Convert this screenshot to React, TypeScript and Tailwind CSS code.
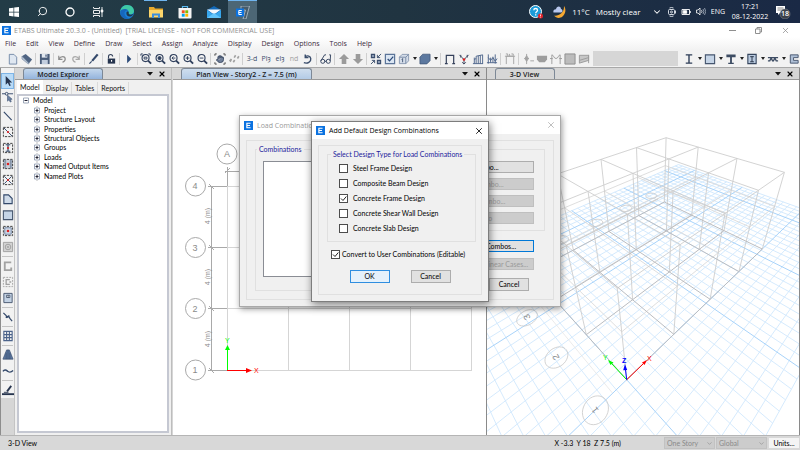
import React from 'react'
import { ChevronDown, Hand, Search, X } from 'lucide-react'

const MENU = [
  'File', 'Edit', 'View', 'Define', 'Draw', 'Select', 'Assign', 'Analyze',
  'Display', 'Design', 'Options', 'Tools', 'Help',
]

const TREE = [
  'Project', 'Structure Layout', 'Properties', 'Structural Objects',
  'Groups', 'Loads', 'Named Output Items', 'Named Plots',
]

// '|' and ':' are wide and narrow separators, 'v' is a drop-down arrow
const TOOLBAR = [
  'new', 'open', '|', 'save', ':', 'undo', 'redo', '|', 'pen', ':', 'lock', '|', 'run', ':',
  'zoomWin', 'zoomFull', 'zoomPrev', 'zoomIn', 'zoomOut', '|', 'pan', 'walk', '|',
  't:3-d', 't:Plȝ', 't:elȝ', 't:nd', 'rotate', '|', 'glasses', '|', 'up', 'down', '|',
  'shrink', 'check', 'cube', 'v', 'solid', 'v', '|', 'frame', 'deform', 'force', 'diagram', '|',
  'gFrame', '|', 'gNode', 'gShell', 'gCurve', 'gBox', 'gDiag',
]

const SECTION_TOOLS = ['beam', 'v', 'square', 'v', 'tee', 'v', 'ibox', 'v', 'deck', 'v', 'wall']

const SIDEBAR = [
  'cursor', 'nodeCursor', '|', 'line', 'dashLine', 'dashI', 'dashCol', 'dashX', '|',
  'poly', 'square', 'dashSquare', 'gOpening', '|', 'gWall', 'gDashWall', 'door', '|',
  'link', '|', 'grid', '|', 'tower', 'wave', '|', 'draft',
]

const navy = '#33486a'

const magnifier = (inner: React.ReactNode) => (
  <g fill="none" stroke="#2f3f5c">
    <circle cx="6" cy="5.5" r="3.8" strokeWidth="1.2" />
    <path d="M8.8 8.3 12 11.5" strokeWidth="2" />
    {inner}
  </g>
)

const dashed = (inner: React.ReactNode, fill = 'none') => (
  <g fill="none">
    <rect x="1.5" y="1.5" width="10" height="10" fill={fill} stroke="#333" strokeDasharray="2.5 1.2" />
    {inner}
  </g>
)

const ICONS: Record<string, React.ReactNode> = {
  new: <path d="M2.500 1.500h5l3 3v7.500h-8z" fill="#dfe7f1" stroke="#7188a6" />,
  open: (
    <g>
      <path d="M1 3.500 5 1l7 6-3.500 4.500z" fill="#4f6482" />
      <path d="M1 3.500v3L8 12l.5-1z" fill="#b9c6d6" stroke="#5b6f8c" strokeWidth=".5" />
    </g>
  ),
  save: (
    <g>
      <path d="M1 1h10.500v11H1z" fill="#4a5d7a" />
      <path d="M3 1h6v4H3z" fill="#e3e9f0" />
      <path d="M3 7.500h6.500V12H3z" fill="#c3cede" />
      <path d="M7 1.500h1.200v2.500H7z" fill="#33486a" />
    </g>
  ),
  undo: <path d="M3 3v4h4M3.200 6.500C5 3 10 3 10 6.500c0 2-1.500 3-3 3.500" fill="none" stroke="#8e8e8e" strokeWidth="1.300" />,
  redo: <path d="M10 3v4H6M9.800 6.500C8 3 3 3 3 6.500c0 2 1.500 3 3 3.500" fill="none" stroke="#a8a8a8" strokeWidth="1.300" />,
  pen: (
    <g stroke={navy} fill="none">
      <path d="m10.500 1.500-6 7" strokeWidth="2.400" />
      <path d="M4 9 1.500 11.500" strokeWidth="1.200" />
    </g>
  ),
  lock: (
    <g>
      <path d="M3.800 6V3.800c0-3 4.500-3 4.500 0" fill="none" stroke="#33415a" strokeWidth="1.200" />
      <path d="M3 6h8v5.500H3z" fill="#26344e" />
      <path d="M6.500 7.500h1.200v2H6.500z" fill="#fff" />
    </g>
  ),
  run: <path d="m4.500 2 4.500 4.500L4.500 11z" fill="#2c4a78" />,
  zoomWin: magnifier(<path d="M1 1h2M1 1v2M11 1H9M11 1v2M4.500 4.500h3v2h-3z" />),
  zoomFull: magnifier(<circle cx="6" cy="5.500" r="1.700" fill="#2f3f5c" />),
  zoomPrev: magnifier(<path d="M8 5.500H4.500M6 3.800 4.300 5.500 6 7.200" />),
  zoomIn: magnifier(<path d="M4 5.500h4M6 3.500v4" />),
  zoomOut: magnifier(<path d="M4 5.500h4" />),
  pan: (
    <g>
      <path d="M1 3V1h2M10 1h2v2M1 10v2h2M12 10v2h-2" fill="none" stroke="#444" />
      <Hand x="2" y="2" width="9" height="9" fill="#71819b" stroke="#33415a" strokeWidth="2.500" />
    </g>
  ),
  walk: (
    <g fill="#a0a0a0">
      <path d="M1 8.500 3 6l1.500 1L3 10zM5 9.500 6.500 7l1.500 1-1.500 2.500zM6 4.500 7.500 2 9 3 7.500 5.500zM9.500 5.500 11 3l1.500 1L11 6.500z" />
    </g>
  ),
  rotate: <path d="M2 10.500c4 1.500 8-1 7.500-4.500C9 3 6 2.500 3.500 4M3.500 1.500V5H7" fill="none" stroke="#3a4d6c" strokeWidth="1.500" />,
  glasses: (
    <g fill="none" stroke="#2f3f5c">
      <circle cx="3" cy="9" r="2.200" />
      <circle cx="9" cy="9" r="2.200" />
      <path d="M5 9h2M1 8.500 5 2h1.500M11 8.500 11.500 2H10" />
    </g>
  ),
  up: <path d="M6.500 1 12 6.500H9V12H4V6.500H1z" fill="#9b9b9b" />,
  down: <path d="M6.500 12 12 6.500H9V1H4v5.500H1z" fill="#9b9b9b" />,
  shrink: (
    <g fill="none" stroke="#3a4d6c">
      <path d="M1.500 1.500h3.500v3.500H1.500zM8 8h3.500v3.500H8z" fill="#8c9cb5" strokeWidth="1.200" />
      <path d="M12 1 8 5M8 2v3h3M1 12l4-4M5 11V8H2" />
    </g>
  ),
  check: (
    <g fill="none">
      <path d="M1.500 1.500h10v10h-10z" fill="#dbe6f3" stroke="#5c7599" strokeWidth="1.300" />
      <path d="m4 6.500 2 2L10 4" stroke="#2c4a78" strokeWidth="1.400" />
    </g>
  ),
  cube: (
    <g fill="#d5dde9" stroke="#7e90aa" strokeWidth=".9">
      <path d="M1.500 4.500h7v7h-7z" />
      <path d="m1.500 4.500 3-3h7l-3 3zM11.500 1.500v7l-3 3v-7z" />
      <path d="M5 6v4M4 7l1-1" fill="none" stroke="#33486a" />
    </g>
  ),
  solid: <path d="m1 4.500 3-3.200h8v7l-3.500 3.500H1z" fill="#5c789f" stroke="#3e5576" strokeWidth=".8" />,
  frame: <path d="M2.500 12V2.500h8V12M1 11.500h3M9 11.500h3" fill="none" stroke="#34405a" strokeWidth="1.300" />,
  deform: (
    <g fill="none" stroke="#34405a">
      <path d="m1.500 2 3 3 2 2.500 2-2.500 3-3M3 5V2M10 5V2M6.500 7v5M4.500 10l2 2 2-2" />
      <circle cx="6.500" cy="7" r="1.400" fill="#e01b1b" stroke="none" />
    </g>
  ),
  force: <path d="M1 11.500h11M2.500 11.500V5M4.500 11.500V3.500L11.500 2v9.500M6.800 3v8.500M9 2.500v9M2.500 7l2-1" fill="none" stroke="#4b638a" />,
  diagram: <path d="M1 10.500h11M2.500 1.500v10M5 5v5.500M7.500 4v6.500M10 1.500v10M2.500 5 5 8l2.500-3L10 9l2-3" fill="none" stroke="#4b638a" />,
  gFrame: <path d="M2.500 12V3.500h8V12M1 3.500h11M2 1h2v2M6 1v2M8 1h2v2" fill="none" stroke="#a2a2a2" />,
  gNode: <path d="M5 1v11M2.500 6h5M5 3 3 6l2 3 2-3zM9 8.500h4" fill="#b5b5b5" stroke="#a2a2a2" />,
  gShell: <path d="M1 3h11v4L9.500 10h-6L1 7z" fill="#9d9d9d" />,
  gCurve: <path d="M2 12V2c2 0 2 4 4.500 4S9 2 11 2v10M0 6h3M10 6h3" fill="none" stroke="#9a9a9a" />,
  gBox: <path d="M1 1h11v11H1z" fill="#bcbcbc" stroke="#8d8d8d" />,
  gDiag: <path d="M1.500 2.500h10V5l-10 3zM1.500 8v3l10-3V5M11.500 2v9" fill="#c6c6c6" stroke="#9a9a9a" />,
  beam: <path d="M3 2h7M3 11h7M6.500 2v9" fill="none" stroke="#2d3d57" strokeWidth="1.500" />,
  square: <path d="M1.500 2h10v9.500h-10z" fill="#c5d4e6" stroke="#46566f" strokeWidth="1.200" />,
  tee: <path d="M1.500 1.500h10v3h-4v6h2v1.500H3.500v-1.500h2v-6h-4z" fill="#3d4c63" />,
  ibox: (
    <g fill="none">
      <path d="M2 1.500h9v10H2z" fill="#b9cadf" stroke="#36465e" strokeWidth="1.200" />
      <path d="M4.500 4h4M4.500 9.500h4M6.500 4v5.500" stroke="#1f2b40" />
    </g>
  ),
  deck: <path d="M1 5h11M1 8.500h2l1-2h1l1 2h1l1-2h1l1 2h2" fill="none" stroke="#3d4c63" strokeWidth="1.400" />,
  wall: <path d="M11 2H2.500v9H11V8H6V5h5z" fill="#aebfd6" stroke="#46566f" />,
  cursor: <path d="M4 1v9.500l2.300-2.200L8 12l1.500-.7L8 8h3z" fill="#26344e" />,
  nodeCursor: (
    <g fill="none" stroke="#33486a">
      <circle cx="5" cy="3" r="1.500" />
      <path d="M0 3h3.500M6.500 3H12" />
      <path d="M6 4.500V11l1.500-1.500L9 12l1-.5L9 9h2z" fill="#6d83a5" strokeWidth=".6" />
    </g>
  ),
  line: <path d="m2 2 8.500 9" stroke="#33486a" strokeWidth="1.200" />,
  dashLine: dashed(
    <g>
      <path d="m2 2 9 9" stroke="#33486a" />
      <circle cx="6.500" cy="6.500" r="1.200" fill="#d22" />
    </g>
  ),
  dashI: dashed(
    <g>
      <path d="M4 3h5M4 10h5M6.500 3v7" stroke="#33486a" strokeWidth="1.300" />
      <circle cx="6.500" cy="6.500" r="1.200" fill="#d22" />
    </g>
  ),
  dashCol: dashed(
    <g>
      <path d="M3.500 2v9M9.500 2v9" stroke="#8795aa" strokeWidth="2" />
      <circle cx="6.500" cy="6.500" r="1.400" fill="#d22" />
    </g>,
    '#c8cfd8'
  ),
  dashX: dashed(
    <g>
      <path d="m2.500 2.500 8 8M10.500 2.500l-8 8" stroke="#33486a" />
      <circle cx="6.500" cy="6.500" r="1.200" fill="#d22" />
    </g>
  ),
  poly: <path d="M2 2h5l4 4v5.500H2z" fill="#cfdbe9" stroke="#33486a" strokeWidth="1.200" />,
  dashSquare: dashed(
    <g>
      <path d="M3 3h7v7H3z" fill="#cfdbe9" stroke="#6e80a0" />
      <circle cx="6.500" cy="6.500" r="1.400" fill="#d22" />
    </g>
  ),
  gOpening: (
    <g fill="#d2d2d2" stroke="#a0a0a0">
      <path d="M1.500 1.500h10v10h-10z" />
      <circle cx="6.500" cy="6.500" r="3" />
      <circle cx="6.500" cy="6.500" r=".8" />
    </g>
  ),
  gWall: <path d="M10 2.500H3v8.500h7V8" fill="none" stroke="#a2a2a2" strokeWidth="2" />,
  gDashWall: (
    <g fill="none" stroke="#a2a2a2">
      <path d="M1.500 1.500h10v10h-10z" strokeDasharray="2 1.200" />
      <path d="M8.500 4H4.500v5h4M8 6.500h2" strokeWidth="1.400" />
    </g>
  ),
  door: (
    <g fill="none">
      <path d="M2 1.500h9v10H2z" fill="#c3d2e4" stroke="#46566f" />
      <path d="M5 3.500h3.500V6H5zM6.700 3.500V6" fill="#fff" stroke="#2d3d57" strokeWidth=".8" />
    </g>
  ),
  link: <path d="m1.500 2 3 3 1 2 2-1 1 2 2.500 3M4 7l4-2" fill="none" stroke="#33486a" strokeWidth="1.300" />,
  grid: <path d="M2 1.500h9v10H2zM2 5h9M2 8.300h9M5 1.500v10M8 1.500v10" fill="none" stroke="#4b638a" strokeWidth="1.200" />,
  tower: <path d="M5 1h3l4 10H1zM4.500 4v7M8.500 4v7M6.500 1v10" fill="#5c789f" stroke="#33486a" strokeWidth=".7" />,
  wave: <path d="M1 7c2-3 4-1 5.500 0S10 8 12 6" fill="none" stroke="#33486a" strokeWidth="1.500" />,
  draft: (
    <g stroke="#26344e" fill="none">
      <path d="M0 11h13" strokeWidth="2" />
      <path d="m10 2-4.500 6" strokeWidth="2" />
      <path d="M2 9h5" />
    </g>
  ),
}

const Icon: React.FC<{ name: string }> = ({ name }) => (
  <svg viewBox="0 0 13 13" className="h-3 w-3 shrink-0">{ICONS[name]}</svg>
)

const ToolItem: React.FC<{ name: string }> = ({ name }) => {
  if (name === '|') return <span className="mx-px h-3 w-[2px] shrink-0 border-l border-[#cfcfcf]" />
  if (name === ':') return <span className="mx-px h-3 w-px shrink-0 bg-[#d4d4d4]" />
  if (name === 'v') {
    return (
      <button aria-label="More" className="flex w-[7px] shrink-0 justify-center">
        <svg viewBox="0 0 4 3" className="h-[3px] w-1"><path d="M0 0h4L2 3z" fill="#222" /></svg>
      </button>
    )
  }
  if (name.startsWith('t:')) {
    const label = name.slice(2)
    return (
      <button
        className={`flex w-[14px] shrink-0 justify-center text-[7px] whitespace-nowrap ${
          label === 'nd' ? 'text-[#a0a0a0]' : 'text-[#3a4d6c]'
        }`}
      >
        {label}
      </button>
    )
  }
  return (
    <button aria-label={name} className="flex w-[14px] shrink-0 justify-center">
      <Icon name={name} />
    </button>
  )
}

const AppLogo: React.FC = () => (
  <svg viewBox="0 0 10 10" className="h-[9px] w-[9px] shrink-0">
    <path d="M0 0h10v10H0z" fill="#0b72e0" />
    <path d="M7.300 2.500H3.200v5h4.100M3.200 5h3.500" fill="none" stroke="#fff" strokeWidth="1.300" />
  </svg>
)

const Taskbar: React.FC = () => (
  <div className="flex h-[23px] shrink-0 items-center bg-gradient-to-r from-[#233c47] via-[#203441] to-[#1a2945] text-[8px] text-white">
    <button aria-label="Start" className="flex w-7 justify-center">
      <svg viewBox="0 0 10 10" className="h-[10px] w-[10px]" fill="#fff">
        <path d="M0 1.300 4.500.7v4H0zM5.200.6 10 0v4.700H5.200zM0 5.400h4.500v4L0 8.800zM5.200 5.400H10V10l-4.800-.6z" />
      </svg>
    </button>
    <button aria-label="Search" className="flex w-7 justify-center">
      <Search size={11} strokeWidth={2} className="-scale-x-100" />
    </button>
    <button aria-label="Cortana" className="flex w-7 justify-center">
      <svg viewBox="0 0 10 10" className="h-[10px] w-[10px]">
        <circle cx="5" cy="5" r="4" fill="none" stroke="#fff" strokeWidth="1.300" />
      </svg>
    </button>
    <button aria-label="Task view" className="flex w-7 justify-center">
      <svg viewBox="0 0 11 10" className="h-[10px] w-[11px]" fill="none" stroke="#fff" strokeWidth=".9">
        <path d="M.5 1V0M.5 1.500h6V0M.5 3.500h6v3h-6zM.5 10V8.500h6V10M9 0v10" />
        <path d="M8.200 3h1.600v2H8.200z" fill="#fff" />
      </svg>
    </button>
    <button aria-label="Edge" className="flex w-[29px] justify-center">
      <svg viewBox="0 0 14 14" className="h-[14px] w-[14px]">
        <circle cx="7" cy="7" r="7" fill="#1a7fd4" />
        <path d="M.3 5.500C1.500 1.800 4.300 0 7.200 0 11.500 0 14 3 14 6c0 2-1.500 3.300-3.500 3.300-1.500 0-2-.6-1.700-1.200C9.500 6.500 8 4.500 5.500 4.500 3 4.500 1 5.800.3 8z" fill="#3fc9a5" />
        <path d="M.2 6C2 3.500 6.500 3.300 8.200 5.500 6 5 4.500 6.500 4.500 8.300c0 2.800 2.500 4.500 4.700 5.300C4.500 14.500 0 12 .2 6z" fill="#1667bd" />
        <path d="M8.700 8.200c-.3 1.600 2.500 2 4.700.5-.5 1.400-1.700 2.500-3 2.700-2.500.3-4.300-1.200-4-3.700.2-1 1.300-1.500 2-1 .4.400.5 1 .3 1.500z" fill="#20384a" />
      </svg>
    </button>
    <button aria-label="File Explorer" className="flex h-full w-[29px] items-center justify-center">
      <span className="flex h-full w-[23px] items-center justify-center border-t border-[#6fb4ee]">
        <svg viewBox="0 0 14 12" className="h-3 w-[14px]">
          <path d="M0 1h5l1 1.500h8V11H0z" fill="#e8a92d" />
          <path d="M0 4h14v7.500H0z" fill="#fbd56b" />
          <path d="M3 7.500h8V12H9V9.500H5V12H3z" fill="#3c8edc" />
        </svg>
      </span>
    </button>
    <button aria-label="Store" className="flex w-[29px] justify-center">
      <svg viewBox="0 0 14 14" className="h-[14px] w-[14px]">
        <path d="M4.500 3.500v-2h5v2" fill="none" stroke="#58b9f0" strokeWidth="1.200" />
        <path d="M.5 3h13v9.500q0 1-1 1h-11q-1 0-1-1z" fill="#f5f5f5" />
        <path d="M3.800 5.300h2.900v2.900H3.800z" fill="#f25022" />
        <path d="M7.300 5.300h2.900v2.900H7.300z" fill="#7fba00" />
        <path d="M3.800 8.800h2.900v2.900H3.800z" fill="#00a4ef" />
        <path d="M7.300 8.800h2.900v2.900H7.300z" fill="#ffb900" />
      </svg>
    </button>
    <button aria-label="Mail" className="flex w-[29px] justify-center">
      <svg viewBox="0 0 14 12" className="h-3 w-[14px]">
        <path d="M0 4 7 0l7 4v8H0z" fill="#1269b8" />
        <path d="M0 3.500h14L7 8.500z" fill="#f4f8fc" />
        <path d="M0 4v8h14V4L7 9z" fill="#37a6ec" />
        <path d="m0 12 7-5 7 5z" fill="#62c4fa" />
      </svg>
    </button>
    <button aria-label="ETABS" className="flex h-full w-[29px] items-center justify-center border-t border-[#6fb4ee] bg-[#4c6675]">
      <svg viewBox="0 0 14 13" className="h-[13px] w-[14px]">
        <path d="M5 0h8.500L10 13H7l2.500-9H5z" fill="#465c6c" stroke="#b4c2cd" strokeWidth=".8" />
        <path d="M0 2.500h8v8H0z" fill="#0b72e0" />
        <path d="M5.800 4.500H2.800v4h3M2.800 6.500h2.700" fill="none" stroke="#fff" />
      </svg>
    </button>

    <div className="ml-auto flex h-full items-center">
      <svg viewBox="0 0 14 14" className="h-[14px] w-[14px]">
        <circle cx="6.500" cy="6.500" r="6" fill="#1c9bd8" stroke="#fff" />
        <path d="M4.800 5.200c0-2.300 3.700-2.300 3.700 0 0 1.500-1.800 1.500-1.800 3M6.700 9.300v1.200" fill="none" stroke="#fff" strokeWidth="1.300" />
        <circle cx="11.500" cy="11" r="2.500" fill="#e3222a" />
        <path d="M11.500 9.500v1.700M11.500 11.800v.7" stroke="#fff" strokeWidth=".8" />
      </svg>
      <svg viewBox="0 0 14 14" className="ml-[10px] h-[14px] w-[14px]">
        <path d="M11 1c2.500 3.500 1.500 8-1.500 10.500S3 13 1 10.500C5 11.500 11.500 8 11 1z" fill="#f5a832" />
        <path d="M.5 7.500C-.3 5 2 4 3 4.300 3.500 1 7.500.5 8 4c2 .2 2 3.500 0 3.500z" fill="#b9c8ee" />
      </svg>
      <span className="ml-[5px]">11°C</span>
      <span className="ml-[6px] w-[50px] whitespace-nowrap">Mostly clear</span>
      <ChevronDown size={10} strokeWidth={2.500} className="ml-[6px] mt-px" />
      <svg viewBox="0 0 8 10" className="ml-[6px] h-[10px] w-2" fill="none" stroke="#e7ebf0" strokeWidth=".9">
        <rect x=".5" y="2.500" width="6" height="5" rx="1" />
        <circle cx="3.500" cy="5" r="1" />
        <path d="M1.500 1Q3.500 0 5.500 1M1.500 9Q3.500 10 5.500 9M7.500 3.500v3" />
      </svg>
      <svg viewBox="0 0 10 8" className="ml-[5px] h-2 w-[10px]" fill="none" stroke="#fff" strokeWidth=".9">
        <path d="M1 1.500h7.500v5H1zM9.300 3v2" />
        <path d="M2.200 2.700h3.500v2.600H2.200z" fill="#fff" />
      </svg>
      <svg viewBox="0 0 10 9" className="ml-[5px] h-[9px] w-[10px]" fill="none" stroke="#fff" strokeWidth=".8">
        <path d="M.5 3h1.500L4 1v7L2 6H.5zM5.500 3.200q1 1.300 0 2.600" />
        <path d="M7 2q1.800 2.500 0 5M8.500 1q2.500 3.500 0 7" stroke="#a9b4c2" />
      </svg>
      <span className="ml-[5px] text-[7px]">ENG</span>
      <span className="ml-[6px] w-[38px] text-center text-[7px] leading-[10px]">17:21<br />08-12-2022</span>
      <div className="relative ml-[6px] mr-[9px] h-[14px] w-4">
        <svg viewBox="0 0 16 14" className="h-[14px] w-4">
          <path d="M1 1h9v7H5l-2 2V8H1z" fill="#fff" />
          <path d="M2.500 3h6M2.500 5h6" stroke="#555" strokeWidth=".7" />
          <circle cx="10" cy="9" r="5" fill="#3d4148" stroke="#8d9298" strokeWidth=".5" />
        </svg>
        <span className="absolute top-[4px] left-[6px] text-[7px] leading-[10px] font-semibold">18</span>
      </div>
    </div>
  </div>
)

const PanelHeader: React.FC<{ title: string; tab: string }> = ({ title, tab }) => (
  <div className="flex h-3 shrink-0 items-end border-b border-[#9a9a9a] bg-[#d6d6d6] pl-2">
    <h2 className={`flex h-[11px] items-center justify-center rounded-t-[3px] border border-b-0 border-[#7d8896] text-[7px] font-semibold text-[#1b1b1b] ${tab}`}>
      {title}
    </h2>
    <button aria-label="Window menu" className="ml-auto flex h-full items-center">
      <svg viewBox="0 0 6 4" className="h-1 w-[6px]"><path d="M0 0h6L3 3.500z" fill="#111" /></svg>
    </button>
    <button aria-label="Close" className="mx-[5px] flex h-full items-center text-black">
      <X size={8} strokeWidth={3.500} />
    </button>
  </div>
)

const ModelExplorer: React.FC = () => (
  <section className="flex w-[157px] shrink-0 flex-col border-r border-[#bdbdbd] bg-[#f0f0f0]">
    <PanelHeader title="Model Explorer" tab="w-[80px] bg-gradient-to-b from-[#c3d7ec] to-[#94b4dc]" />
    <div className="flex h-[14px] shrink-0 items-end pl-[2px] font-['Lato'] text-[7px] text-[#111]">
      {['Model', 'Display', 'Tables', 'Reports'].map((name, i) => (
        <button
          key={name}
          className={
            i === 0
              ? 'h-[14px] bg-white px-[3px] leading-[12px]'
              : 'h-[12px] border-r border-[#dadada] px-[3px] leading-[12px]'
          }
        >
          {name}
        </button>
      ))}
    </div>
    <div className="mr-[2px] mb-[2px] ml-[2px] flex-1 border-2 border-[#c5c8d2] bg-white font-['Lato'] text-[7px] text-black">
      <ul className="flex h-[85px] flex-col pl-1">
        <li className="flex flex-1 items-center gap-[3px]">
          <TreeBox open />
          Model
        </li>
        {TREE.map((name) => (
          <li key={name} className="flex flex-1 items-center gap-[3px] pl-[11px]">
            <TreeBox />
            {name}
          </li>
        ))}
      </ul>
    </div>
  </section>
)

const TreeBox: React.FC<{ open?: boolean }> = ({ open }) => (
  <svg viewBox="0 0 7 9" className="h-[9px] w-[7px]" fill="none">
    {!open && <path d="M3 0v9" stroke="#bbb" strokeDasharray="1 1" />}
    <path d="M.5 2h5v5h-5z" fill="#fff" stroke="#8793a8" strokeWidth=".8" />
    <path d="M1.500 4.500h3" stroke="#223" />
    {!open && <path d="M3 3v3" stroke="#223" />}
  </svg>
)

const PlanDrawing: React.FC = () => (
  <svg className="h-full w-full font-['Liberation_Sans']">
    <g transform="translate(-173 -80)" fill="none">
      <g stroke="#d5d5d5">
        <path d="M227.500 171v199M288.500 186v184M349.500 186v184M410.500 186v184M471.500 186v184" />
        <path d="M227 186.500h245M227 247.500h245M227 308.500h245M227 370.500h245" />
      </g>
      <g stroke="#a9a9a9">
        <path d="M211.500 186v184M208 186.500h19M208 247.500h19M208 308.500h19M208 370.500h19M227.500 167v19M225 171.500h247" />
        <path d="m209 184 5 5M209 245l5 5M209 306l5 5M209 368l5 5M225 173l5-5" />
        <circle cx="195.500" cy="186" r="10" />
        <circle cx="195.500" cy="247.500" r="10" />
        <circle cx="195.500" cy="308.500" r="10" />
        <circle cx="195.500" cy="370" r="10" />
        <circle cx="227" cy="154" r="10" />
      </g>
      <g fill="#8b8b8b" fontSize="9" textAnchor="middle">
        <text x="195" y="189">4</text>
        <text x="195" y="251">3</text>
        <text x="195" y="312">2</text>
        <text x="195" y="373">1</text>
        <text x="227" y="157">A</text>
      </g>
      <g fill="#8b8b8b" fontSize="7" textAnchor="middle">
        <text transform="translate(210 216) rotate(-90)">4 (m)</text>
        <text transform="translate(210 277) rotate(-90)">4 (m)</text>
        <text transform="translate(210 339) rotate(-90)">4 (m)</text>
      </g>
      <path d="M227.500 370V350" stroke="#0f0" />
      <path d="m225 350 2.500-5 2.500 5z" fill="#0f0" />
      <path d="M227 370.500h20" stroke="red" />
      <path d="m246 368 6 2.500-6 2.500z" fill="red" />
      <text x="225" y="343" fontSize="7" fill="#0f0">Y</text>
      <text x="254" y="373" fontSize="7" fill="red">X</text>
    </g>
  </svg>
)

// Perspective view: x and y count bays, z is 0 at the base and 1 at the top story
const project = (x: number, y: number, z = 0) => {
  const w = 1 + 0.1492 * x + 0.1507 * y - 0.268 * z
  return [
    (627.7 + 147.8 * x + 48.1 * y - 175.2 * z) / w,
    (379.7 + 4.48 * x + 5.44 * y - 168.7 * z) / w,
  ]
}

const segment = (a: number[], b: number[]) =>
  `M${a.map((n) => n.toFixed(1)).join(' ')}L${b.map((n) => n.toFixed(1)).join(' ')}`

const levelPath = (z: number) => {
  const parts: string[] = []
  for (let x = 0; x <= 4; x++) parts.push(segment(project(x, 0, z), project(x, 3, z)))
  for (let y = 0; y <= 3; y++) parts.push(segment(project(0, y, z), project(4, y, z)))
  return parts.join('')
}

const columnPath = () => {
  const parts: string[] = []
  for (let x = 0; x <= 4; x++) {
    for (let y = 0; y <= 3; y++) parts.push(segment(project(x, y), project(x, y, 1)))
  }
  return parts.join('')
}

const STEP = 0.1875

const planePath = (major: boolean) => {
  const parts: string[] = []
  for (let i = -9; i <= 34; i++) {
    if ((i % 10 === 0) === major) parts.push(segment(project(i * STEP, -9 * STEP), project(i * STEP, 24 * STEP)))
  }
  for (let j = -9; j <= 24; j++) {
    if ((j % 10 === 0) === major) parts.push(segment(project(-9 * STEP, j * STEP), project(34 * STEP, j * STEP)))
  }
  return parts.join('')
}

const bubblePath = (cx: number, cy: number) => {
  const points: string[] = []
  for (let i = 0; i < 32; i++) {
    const t = (i / 32) * Math.PI * 2
    points.push(project(cx + 0.166 * Math.cos(t), cy + 0.166 * Math.sin(t)).map((n) => n.toFixed(1)).join(' '))
  }
  return `M${points.join('L')}Z`
}

const ThreeDDrawing: React.FC = () => (
  <svg className="h-full w-full font-['Liberation_Sans']">
    <g transform="translate(-488 -80)" fill="none">
      <path d={planePath(false)} stroke="#d0e8fd" strokeWidth=".9" />
      <path d={planePath(true)} stroke="#a8d3fa" />
      <g stroke="#cecece" strokeWidth=".9">
        <path d={levelPath(0.6)} stroke="#dadada" />
        <path d={levelPath(1)} />
        <path d={columnPath()} />
      </g>
      <path d={levelPath(0)} stroke="#bbbdc1" />
      <g stroke="#c8c8c8" strokeWidth=".8">
        <path d={segment(project(0, 3.25), project(4, 3.25))} />
        <path d={segment(project(-0.25, 0), project(-0.25, 3))} stroke="#e6e6e6" />
        <path d="m665 190 62 23" stroke="#d2d2d2" />
        {[0, 1, 2, 3, 4].map((x) => (
          <path key={x} d={bubblePath(x, 3.53)} />
        ))}
        {[0, 1, 2, 3].map((y) => (
          <path key={y} d={bubblePath(-0.53, y)} />
        ))}
      </g>
      <g fill="#8a8a8a" fontSize="9" textAnchor="middle" dominantBaseline="central">
        <text transform="translate(596 410) rotate(-127)">1</text>
        <text transform="translate(557 357) rotate(-120)">2</text>
        <text transform="translate(528 317) rotate(-115)">3</text>
      </g>
      <path d="M627.700 379.700 644 364" stroke="red" />
      <path d="m648 360-2.500 5-2.500-2.500z" fill="red" />
      <path d="M627.700 379.700 613 364" stroke="#0f0" />
      <path d="m609 360 5.500 2.500-3 2.500z" fill="#0f0" />
      <path d="m627.700 379.700-1.200-10" stroke="#00f" />
      <path d="m626 364 2.200 6-4 .3z" fill="#00f" />
      <text x="648" y="361" fontSize="7" fill="red">X</text>
      <text x="604" y="360" fontSize="7" fill="#0f0">Y</text>
      <text x="623" y="363" fontSize="7" fontWeight="bold" fill="#00f">Z</text>
    </g>
  </svg>
)

const CheckBox: React.FC<{ label: string; checked?: boolean; gap?: string }> = ({ label, checked, gap = 'gap-[5px]' }) => (
  <label className={`flex items-center ${gap}`}>
    <span className="relative h-[9px] w-[9px]">
      <input
        type="checkbox"
        defaultChecked={checked}
        className="peer block h-[9px] w-[9px] appearance-none border border-[#4c4c4c] bg-white"
      />
      <svg viewBox="0 0 9 9" className="pointer-events-none absolute inset-0 hidden h-[9px] w-[9px] peer-checked:block">
        <path d="m2 4.500 2 2 3.300-4" fill="none" stroke="#222" />
      </svg>
    </span>
    {label}
  </label>
)

const DISABLED = 'h-3 border border-[#bfbfbf] bg-[#cccccc] text-[#9a9a9a]'
const NORMAL = 'h-[13px] border border-[#adadad] bg-[#e1e1e1] text-black'

const LoadCombinations: React.FC = () => (
  <div role="dialog" aria-label="Load Combinations" className="absolute top-[115px] left-[239px] flex h-[192px] w-[322px] flex-col border border-[#a9a9a9] bg-[#f0f0f0] shadow-[1px_2px_6px_rgba(0,0,0,0.4)]">
    <div className="flex h-[18px] shrink-0 items-center gap-1 bg-white px-1 text-[7px] text-[#999]">
      <AppLogo />
      Load Combinations
      <X size={10} strokeWidth={1.500} className="ml-auto" />
    </div>
    <div className="m-[6px] mb-[8px] flex flex-1 gap-2 border border-[#e0e0e0] px-2 pb-2 font-['Lato'] text-[7px]">
      <fieldset className="mt-[4px] w-[132px] border border-[#e0e0e0] px-[7px] pt-2 pb-3">
        <legend className="-ml-[6px] px-[2px] leading-[8px] text-[#1c1c9c]">Combinations</legend>
        <select aria-label="Combinations" size={5} className="block h-[116px] w-full appearance-none border border-[#8a8d94] bg-white" />
      </fieldset>
      <div className="flex flex-1 flex-col">
        <fieldset aria-label="Combination actions" className="mt-2 flex flex-col gap-[5px] border border-[#e0e0e0] px-[10px] pt-[11px] pb-[6px]">
          <button className="h-3 border border-[#adadad] bg-[#e1e1e1] text-black">Add New Combo...</button>
          <button disabled className={DISABLED}>Add Copy of Combo...</button>
          <button disabled className={DISABLED}>Modify/Show Combo...</button>
          <button disabled className={DISABLED}>Delete Combo</button>
        </fieldset>
        <div className="mt-[9px] flex flex-col gap-[6px] px-[11px]">
          <button className="h-3 border border-[#0078d7] bg-[#e1e1e1] text-black">Add Default Design Combos...</button>
          <button disabled className={DISABLED}>Convert Combos to Nonlinear Cases...</button>
        </div>
        <div className="mt-2 flex justify-end gap-5 pr-4">
          <button className={`${NORMAL} w-10`}>OK</button>
          <button className={`${NORMAL} w-10`}>Cancel</button>
        </div>
      </div>
    </div>
  </div>
)

const AddDefaultCombinations: React.FC = () => (
  <div role="dialog" aria-label="Add Default Design Combinations" className="absolute top-[121px] left-[311px] flex h-[181px] w-[178px] flex-col border border-[#7d7d7d] bg-[#f0f0f0] shadow-[1px_2px_8px_rgba(0,0,0,0.5)]">
    <div className="flex h-[17px] shrink-0 items-center gap-1 bg-white px-1 text-[7px] text-black">
      <AppLogo />
      Add Default Design Combinations
      <button aria-label="Close" className="ml-auto"><X size={10} strokeWidth={2} /></button>
    </div>
    <div className="m-[6px] flex flex-1 flex-col border border-[#e0e0e0] px-2 font-['Lato'] text-[7px] text-black">
      <fieldset className="mt-[4px] border border-[#e0e0e0] px-[11px] pt-[6px] pb-[8px]">
        <legend className="-ml-2 px-[2px] leading-[8px] whitespace-nowrap text-[#1c1c9c]">Select Design Type for Load Combinations</legend>
        <div className="flex flex-col gap-[6px]">
          <CheckBox label="Steel Frame Design" />
          <CheckBox label="Composite Beam Design" />
          <CheckBox label="Concrete Frame Design" checked />
          <CheckBox label="Concrete Shear Wall Design" />
          <CheckBox label="Concrete Slab Design" />
        </div>
      </fieldset>
      <div className="mt-2 pl-1">
        <CheckBox label="Convert to User Combinations (Editable)" checked gap="gap-[2px]" />
      </div>
      <div className="mt-[11px] flex justify-center gap-[21px]">
        <button className="h-[13px] w-10 border border-[#2f8ee0] bg-[#e5f1fb]">OK</button>
        <button className={`${NORMAL} w-10`}>Cancel</button>
      </div>
    </div>
  </div>
)

const StatusBar: React.FC = () => (
  <div className="flex h-[15px] shrink-0 items-center border-t border-[#b5b5b5] bg-[#d8d8d8] pl-2 font-['Lato'] text-[7px] text-black">
    <span>3-D View</span>
    <span className="mr-[43px] ml-auto whitespace-pre">X -3.3  Y 18  Z 7.5 (m)</span>
    {['One Story', 'Global'].map((name) => (
      <div key={name} className="relative mr-px h-3 w-[51px]">
        <select disabled aria-label={name} className="h-3 w-full appearance-none border border-[#c2c2c2] bg-[#cccccc] pl-[2px] text-[#8a8a8a]">
          <option>{name}</option>
        </select>
        <ChevronDown size={7} className="absolute top-[3px] right-[2px] text-[#8a8a8a]" />
      </div>
    ))}
    <button className="mx-px h-[10px] w-[30px] bg-[#f4f4f4]">Units...</button>
  </div>
)

export default function App() {
  return (
    <div className="relative flex h-screen flex-col overflow-hidden bg-[#d6d6d6] font-['Open_Sans',sans-serif] leading-[9px]">
      <Taskbar />

      <header className="flex h-[14px] shrink-0 items-center gap-[3px] bg-white pl-[2px] text-[7px] text-[#8f8f8f]">
        <AppLogo />
        <h1 className="whitespace-pre">ETABS Ultimate 20.3.0 - (Untitled)  [TRIAL LICENSE - NOT FOR COMMERCIAL USE]</h1>
        <div className="mr-[10px] ml-auto flex items-center gap-[19px]">
          <svg viewBox="0 0 7 7" className="h-[7px] w-[7px]"><path d="M0 3.500h7" stroke="#8f8f8f" /></svg>
          <svg viewBox="0 0 7 7" className="h-[7px] w-[7px]" fill="none" stroke="#8f8f8f">
            <path d="M.5 2h4.500v4.500H.5zM2 2V.5h4.500V5H5" />
          </svg>
          <X size={9} strokeWidth={2} />
        </div>
      </header>

      <nav className="flex h-[13px] shrink-0 items-center gap-[10px] bg-gradient-to-b from-white to-[#f2f2f2] pl-[5px] text-[7px] text-[#3b2c3c]">
        {MENU.map((name) => (
          <button key={name}>{name}</button>
        ))}
      </nav>

      <div className="flex h-[18px] shrink-0 items-center border-b border-[#a8a8a8] bg-[#f2f2f2]">
        <div className="flex items-center pl-[6px]">
          {TOOLBAR.map((name, i) => (
            <ToolItem key={i} name={name} />
          ))}
        </div>
        <div className="ml-[2px] h-[15px] flex-1 bg-[#d6d6d6]" />
        <div className="flex w-[122px] items-center overflow-hidden pl-[4px]">
          {SECTION_TOOLS.map((name, i) => (
            <ToolItem key={i} name={name} />
          ))}
        </div>
      </div>

      <main className="flex min-h-0 flex-1">
        <aside className="w-[15px] shrink-0 border-x border-l-[#8d8d8d] border-r-[#c4c4c4] bg-[#d6d6d6]">
          <div className="flex flex-col items-center bg-[#f2f2f2] pt-[5px]">
            {SIDEBAR.map((name, i) =>
              name === '|' ? (
                <span key={i} className="my-px h-px w-[11px] bg-[#c4c4c4]" />
              ) : (
                <button
                  key={i}
                  aria-label={name}
                  className={`flex h-4 w-[13px] items-center justify-center ${
                    name === 'cursor' ? 'border border-[#7db4e6] bg-[#b9dbf7]' : ''
                  }`}
                >
                  <Icon name={name} />
                </button>
              )
            )}
          </div>
        </aside>

        <ModelExplorer />

        <section className="ml-px flex min-w-0 flex-1 flex-col bg-white">
          <PanelHeader title="Plan View - Story2 - Z = 7.5 (m)" tab="w-[131px] bg-gradient-to-b from-[#cfdeee] to-[#b3cbe6]" />
          <div className="min-h-0 flex-1">
            <PlanDrawing />
          </div>
        </section>

        <section className="flex min-w-0 flex-1 flex-col border-x border-[#8a8a8a] bg-white">
          <PanelHeader title="3-D View" tab="w-[60px] bg-[#d6d6d6]" />
          <div className="min-h-0 flex-1">
            <ThreeDDrawing />
          </div>
        </section>
      </main>

      <StatusBar />

      <LoadCombinations />
      <AddDefaultCombinations />
    </div>
  )
}
